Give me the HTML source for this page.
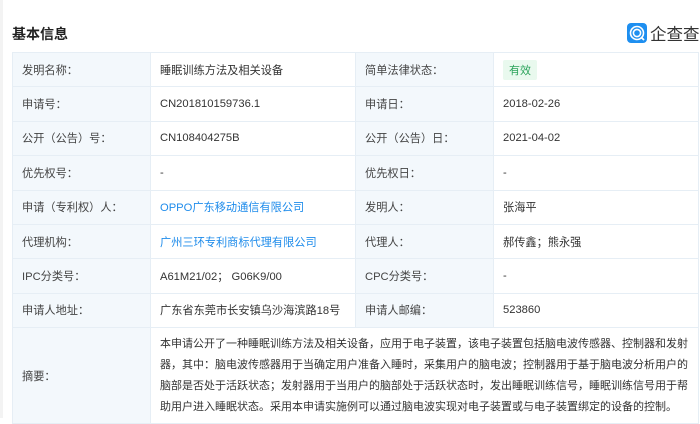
<!DOCTYPE html>
<html><head><meta charset="utf-8"><style>
*{margin:0;padding:0;box-sizing:border-box}
body{width:700px;height:418px;overflow:hidden;background:#fff;font-family:"Liberation Sans","Noto Sans CJK SC",sans-serif;color:#333;font-size:11.2px;position:relative}
.strip{position:absolute;left:0;top:0;width:3px;height:418px;background:#f3f3f3}
h1{position:absolute;left:12px;top:24px;font-size:14px;font-weight:bold;color:#222}
.logo{position:absolute;left:627px;top:22px;height:21px;display:flex;align-items:center;white-space:nowrap;width:80px}
.ic{width:20px;height:20px;flex:none;background:#1e8ff0;border-radius:4px;position:relative;margin-right:3px}
.logo span{font-size:16.5px;color:#333;letter-spacing:0px}
table{position:absolute;left:12px;top:52px;width:686px;border-collapse:collapse;table-layout:fixed}
td{border:1px solid #e6eef5;height:34.4px;padding:0 9px;vertical-align:middle;white-space:nowrap;overflow:hidden}
td.l{background:#f3f8fc;color:#444}
.b{color:#1f8ceb}
.tag{display:inline-block;background:#e9f9ee;color:#2aa35a;font-size:11px;padding:2px 6px;border-radius:2px}
.abs td{height:96px}
.abs td.t{white-space:nowrap;line-height:21px;padding:0 0 0 9px;font-size:11px}
</style></head><body>
<div class="strip"></div>
<h1>基本信息</h1>
<div class="logo"><div class="ic"><svg width="20" height="20" viewBox="0 0 20 20"><circle cx="10" cy="10" r="6.5" fill="none" stroke="#fff" stroke-width="1.6"/><circle cx="10" cy="10" r="3.6" fill="none" stroke="#fff" stroke-width="1.6"/><path d="M14 14l3 3" stroke="#fff" stroke-width="1.8"/></svg></div><span>企查查</span></div>
<table>
<colgroup><col style="width:138px"><col style="width:205px"><col style="width:138px"><col style="width:205px"></colgroup>
<tr><td class="l">发明名称：</td><td>睡眠训练方法及相关设备</td><td class="l">简单法律状态：</td><td><span class="tag">有效</span></td></tr>
<tr><td class="l">申请号：</td><td>CN201810159736.1</td><td class="l">申请日：</td><td>2018-02-26</td></tr>
<tr><td class="l">公开（公告）号：</td><td>CN108404275B</td><td class="l">公开（公告）日：</td><td>2021-04-02</td></tr>
<tr><td class="l">优先权号：</td><td>-</td><td class="l">优先权日：</td><td>-</td></tr>
<tr><td class="l">申请（专利权）人：</td><td class="b">OPPO广东移动通信有限公司</td><td class="l">发明人：</td><td>张海平</td></tr>
<tr><td class="l">代理机构：</td><td class="b">广州三环专利商标代理有限公司</td><td class="l">代理人：</td><td>郝传鑫；熊永强</td></tr>
<tr><td class="l">IPC分类号：</td><td>A61M21/02； G06K9/00</td><td class="l">CPC分类号：</td><td>-</td></tr>
<tr><td class="l">申请人地址：</td><td>广东省东莞市长安镇乌沙海滨路18号</td><td class="l">申请人邮编：</td><td>523860</td></tr>
<tr class="abs"><td class="l">摘要：</td><td class="t" colspan="3">本申请公开了一种睡眠训练方法及相关设备，应用于电子装置，该电子装置包括脑电波传感器、控制器和发射<br>器，其中：脑电波传感器用于当确定用户准备入睡时，采集用户的脑电波；控制器用于基于脑电波分析用户的<br>脑部是否处于活跃状态；发射器用于当用户的脑部处于活跃状态时，发出睡眠训练信号，睡眠训练信号用于帮<br>助用户进入睡眠状态。采用本申请实施例可以通过脑电波实现对电子装置或与电子装置绑定的设备的控制。</td></tr>
</table>
</body></html>
